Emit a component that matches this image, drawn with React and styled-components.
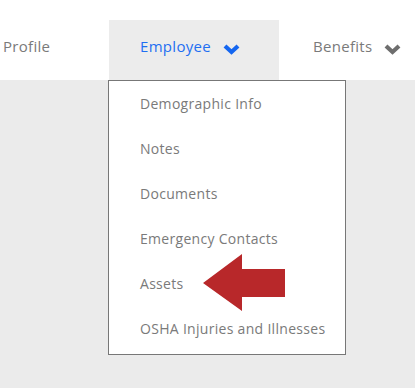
import React from "react";
import styled, { createGlobalStyle } from "styled-components";

const GlobalStyle = createGlobalStyle`
  html, body {
    margin: 0;
    padding: 0;
    background: #ebebeb;
  }
  body {
    font-family: "Open Sans", "Liberation Sans", sans-serif;
  }
`;

const Page = styled.div`
  position: relative;
  width: 415px;
  height: 388px;
  overflow: hidden;
  background: #ebebeb;
`;

const TopBar = styled.div`
  height: 80px;
  background: #ffffff;
  padding-top: 20px;
  box-sizing: border-box;
`;

const Nav = styled.nav`
  display: flex;
  flex-direction: row;
  height: 60px;
`;

const Tab = styled.div`
  position: relative;
  display: flex;
  flex-direction: row;
  align-items: center;
  gap: 11px;
  box-sizing: border-box;
  width: ${({ width }) => (width ? `${width}px` : "auto")};
  flex: ${({ width }) => (width ? "none" : "1")};
  padding-left: ${({ pad }) => pad}px;
  padding-bottom: 9px;
  background: ${({ active }) => (active ? "#ececec" : "transparent")};
  color: ${({ active }) => (active ? "#1f6ff2" : "#7a7a7a")};
  font-size: 15px;
  letter-spacing: 0.3px;
  white-space: nowrap;
`;

const Chevron = styled.svg`
  width: 19px;
  height: 12px;
  margin-top: 6px;
  color: ${({ active }) => (active ? "#1466f0" : "#6e6e6e")};
`;

const Menu = styled.ul`
  position: absolute;
  top: 60px;
  left: -1px;
  box-sizing: border-box;
  width: 238px;
  margin: 0;
  padding: 0 0 3px 0;
  list-style: none;
  background: #ffffff;
  border: 1px solid #777777;
  z-index: 2;
`;

const MenuItem = styled.li`
  height: 45px;
  display: flex;
  align-items: center;
  padding-left: 31px;
  color: #7a7a7a;
  font-size: 14px;
  letter-spacing: 0.3px;
`;

const Arrow = styled.svg`
  position: absolute;
  left: 0;
  top: 0;
  z-index: 3;
  pointer-events: none;
`;

const ChevronIcon = ({ active }) => (
  <Chevron active={active} viewBox="0 0 19 12">
    <polyline
      points="3,3 9.5,9 16,3"
      fill="none"
      stroke="currentColor"
      strokeWidth="4.2"
      strokeLinecap="butt"
      strokeLinejoin="miter"
    />
  </Chevron>
);

const items = [
  "Demographic Info",
  "Notes",
  "Documents",
  "Emergency Contacts",
  "Assets",
  "OSHA Injuries and Illnesses",
];

export default function App() {
  return (
    <Page>
      <GlobalStyle />
      <TopBar>
        <Nav>
          <Tab width={109} pad={3}>
            Profile
          </Tab>
          <Tab width={170} pad={31} active>
            Employee
            <ChevronIcon active />
            <Menu>
              {items.map((item) => (
                <MenuItem key={item}>{item}</MenuItem>
              ))}
            </Menu>
          </Tab>
          <Tab pad={34}>
            Benefits
            <ChevronIcon />
          </Tab>
        </Nav>
      </TopBar>
      <Arrow width="415" height="388" viewBox="0 0 415 388">
        <polygon
          points="203,283 242,254 242,269 285,269 285,297 242,297 242,311"
          fill="#b8282a"
        />
      </Arrow>
    </Page>
  );
}
